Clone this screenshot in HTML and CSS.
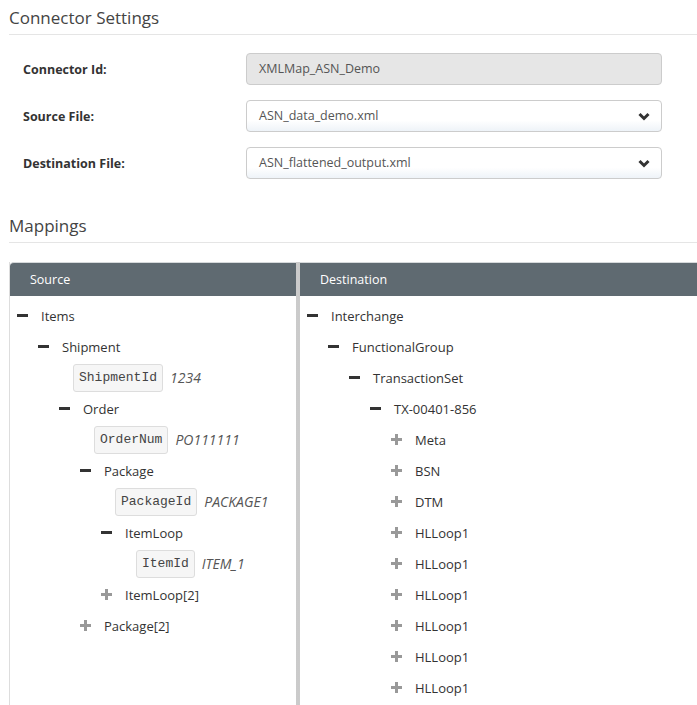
FILE: index.html
```html
<!DOCTYPE html>
<html>
<head>
<meta charset="utf-8">
<link rel="stylesheet" href="styles.css">
</head>
<body>
<div class="page">
  <h3 class="section-title">Connector Settings</h3>
  <div class="form">
    <div class="form-row">
      <label class="form-label">Connector Id:</label>
      <div class="field field-disabled">XMLMap_ASN_Demo</div>
    </div>
    <div class="form-row">
      <label class="form-label">Source File:</label>
      <div class="field field-select">ASN_data_demo.xml
        <svg class="chevron" width="12" height="9" viewBox="0 0 12 9"><path d="M1.5 2 L6 6.5 L10.5 2" fill="none" stroke="#333" stroke-width="3"/></svg>
      </div>
    </div>
    <div class="form-row">
      <label class="form-label">Destination File:</label>
      <div class="field field-select">ASN_flattened_output.xml
        <svg class="chevron" width="12" height="9" viewBox="0 0 12 9"><path d="M1.5 2 L6 6.5 L10.5 2" fill="none" stroke="#333" stroke-width="3"/></svg>
      </div>
    </div>
  </div>

  <h3 class="section-title mappings-title">Mappings</h3>

  <div class="mapper">
    <div class="panel panel-source">
      <div class="panel-head">Source</div>
      <ul class="tree">
        <li><div class="node"><span class="tg minus"></span><span class="nm">Items</span></div>
          <ul>
            <li><div class="node"><span class="tg minus"></span><span class="nm">Shipment</span></div>
              <ul>
                <li><div class="node leaf"><code class="key">ShipmentId</code><em class="val">1234</em></div></li>
                <li><div class="node"><span class="tg minus"></span><span class="nm">Order</span></div>
                  <ul>
                    <li><div class="node leaf"><code class="key">OrderNum</code><em class="val">PO111111</em></div></li>
                    <li><div class="node"><span class="tg minus"></span><span class="nm">Package</span></div>
                      <ul>
                        <li><div class="node leaf"><code class="key">PackageId</code><em class="val">PACKAGE1</em></div></li>
                        <li><div class="node"><span class="tg minus"></span><span class="nm">ItemLoop</span></div>
                          <ul>
                            <li><div class="node leaf"><code class="key">ItemId</code><em class="val">ITEM_1</em></div></li>
                          </ul>
                        </li>
                        <li><div class="node"><span class="tg plus"></span><span class="nm">ItemLoop[2]</span></div></li>
                      </ul>
                    </li>
                    <li><div class="node"><span class="tg plus"></span><span class="nm">Package[2]</span></div></li>
                  </ul>
                </li>
              </ul>
            </li>
          </ul>
        </li>
      </ul>
    </div>
    <div class="splitter"></div>
    <div class="panel panel-dest">
      <div class="panel-head">Destination</div>
      <ul class="tree">
        <li><div class="node"><span class="tg minus"></span><span class="nm">Interchange</span></div>
          <ul>
            <li><div class="node"><span class="tg minus"></span><span class="nm">FunctionalGroup</span></div>
              <ul>
                <li><div class="node"><span class="tg minus"></span><span class="nm">TransactionSet</span></div>
                  <ul>
                    <li><div class="node"><span class="tg minus"></span><span class="nm">TX-00401-856</span></div>
                      <ul>
                        <li><div class="node"><span class="tg plus"></span><span class="nm">Meta</span></div></li>
                        <li><div class="node"><span class="tg plus"></span><span class="nm">BSN</span></div></li>
                        <li><div class="node"><span class="tg plus"></span><span class="nm">DTM</span></div></li>
                        <li><div class="node"><span class="tg plus"></span><span class="nm">HLLoop1</span></div></li>
                        <li><div class="node"><span class="tg plus"></span><span class="nm">HLLoop1</span></div></li>
                        <li><div class="node"><span class="tg plus"></span><span class="nm">HLLoop1</span></div></li>
                        <li><div class="node"><span class="tg plus"></span><span class="nm">HLLoop1</span></div></li>
                        <li><div class="node"><span class="tg plus"></span><span class="nm">HLLoop1</span></div></li>
                        <li><div class="node"><span class="tg plus"></span><span class="nm">HLLoop1</span></div></li>
                      </ul>
                    </li>
                  </ul>
                </li>
              </ul>
            </li>
          </ul>
        </li>
      </ul>
    </div>
  </div>
</div>
</body>
</html>
```

FILE: styles.css
```css
html, body {
  margin: 0;
  padding: 0;
  background: #fff;
  overflow: hidden;
}
body {
  font-family: "Open Sans", "Noto Sans", sans-serif;
  color: #333;
  font-size: 13px;
}
.page {
  padding-left: 9px;
  width: 720px;
}
.section-title {
  margin: 0;
  padding-top: 6px;
  height: 28px;
  font-size: 17px;
  font-weight: 400;
  line-height: 24px;
  color: #444;
  border-bottom: 1px solid #e5e5e5;
  width: 688px;
}
.mappings-title {
  margin-top: 0;
  padding-top: 9px;
  height: 28px;
}
.form {
  padding: 18px 0 26px 14px;
  display: flex;
  flex-direction: column;
  gap: 15px;
}
.form-row {
  display: grid;
  grid-template-columns: 223px 416px;
  align-items: center;
}
.form-label {
  font-weight: 700;
  font-size: 12.5px;
  color: #333;
}
.field {
  position: relative;
  box-sizing: border-box;
  height: 32px;
  border: 1px solid #ccc;
  border-radius: 4px;
  padding: 0 12px;
  line-height: 30px;
  font-size: 12.5px;
  color: #555;
}
.field-disabled {
  background: #e6e6e6;
}
.field-select {
  background: linear-gradient(#fff 65%, #eef3f8);
}
.chevron {
  position: absolute;
  right: 11px;
  top: 11px;
}
.mapper {
  margin-top: 19px;
  display: flex;
  width: 720px;
  height: 460px;
}
.panel {
  display: flex;
  flex-direction: column;
}
.panel-source {
  width: 286px;
  border-left: 1px solid #ddd;
}
.panel-dest {
  flex: 1;
}
.panel-head {
  height: 34px;
  box-sizing: border-box;
  background: #5f6a71;
  border-top: 1px solid #d6d9db;
  color: #fff;
  font-size: 12.5px;
  line-height: 33px;
  padding-left: 20px;
}
.panel-source .panel-head {
  border-top-left-radius: 4px;
}
.splitter {
  width: 4px;
  background-color: #ececec;
  background-image: radial-gradient(#c8c8c8 0.7px, transparent 0.8px);
  background-size: 2px 2px;
}
.tree, .tree ul {
  list-style: none;
  margin: 0;
  padding: 0;
}
.tree {
  padding-top: 4px;
}
.tree ul {
  padding-left: 21px;
}
.node {
  height: 31px;
  display: flex;
  align-items: center;
  padding-left: 7px;
  white-space: nowrap;
}
.tg {
  width: 11px;
  height: 11px;
  margin-right: 13px;
  position: relative;
  flex: none;
}
.minus::before {
  content: "";
  position: absolute;
  left: 0;
  top: 4px;
  width: 11px;
  height: 3px;
  background: #333;
}
.plus::before, .plus::after {
  content: "";
  position: absolute;
  background: #999;
}
.plus::before {
  left: 0;
  top: 4px;
  width: 11px;
  height: 3px;
}
.plus::after {
  left: 4px;
  top: 0;
  width: 3px;
  height: 11px;
}
.nm {
  font-size: 13px;
  color: #333;
}
.leaf {
  padding-left: 21px;
}
.key {
  box-sizing: border-box;
  height: 28px;
  line-height: 26px;
  padding: 0 5px;
  font-family: "Liberation Mono", "DejaVu Sans Mono", monospace;
  font-size: 13px;
  color: #444;
  background: #f6f6f6;
  border: 1px solid #ddd;
  border-radius: 3px;
}
.val {
  margin-left: 7px;
  font-size: 14px;
  color: #555;
}
```
